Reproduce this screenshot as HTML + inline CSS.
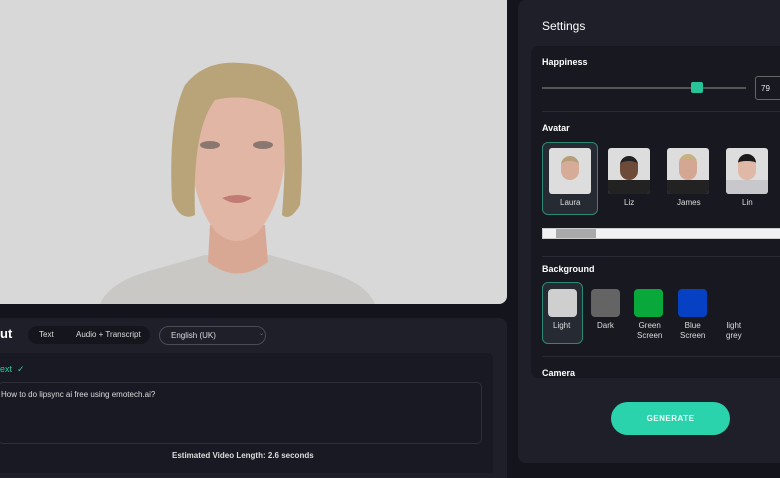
<!DOCTYPE html>
<html><head><style>
*{margin:0;padding:0;box-sizing:border-box}
body{width:780px;height:470px;overflow:hidden;background:#14151c;font-family:"Liberation Sans",sans-serif;color:#e6e6ea;position:relative}
.a{position:absolute}
.t{font-size:8px;color:#ddd}
.b{font-weight:bold}
</style></head><body>
<div class="a" style="left:0;top:0;width:507px;height:304px;background:#d8d8d8;border-radius:0 0 8px 0;overflow:hidden">
  <svg width="507" height="304" style="position:absolute;left:0;top:0">
    <path d="M100 304 Q110 280 160 268 L205 255 L270 255 L315 268 Q365 280 375 304 Z" fill="#c9c8c5"/>
    <path d="M210 225 L208 262 Q237 285 268 262 L265 225 Z" fill="#d9a894"/>
    <path d="M190 135 Q188 70 237 68 Q288 70 286 135 Q286 200 258 232 Q237 250 216 232 Q190 200 190 135Z" fill="#e2b6a4"/>
    <path d="M172 200 Q168 120 185 85 Q205 60 240 63 Q285 64 297 100 Q305 150 300 205 Q290 222 282 215 Q288 140 280 110 Q250 92 215 100 Q192 130 195 215 Q180 222 172 200Z" fill="#b9a47a"/>
    <ellipse cx="210" cy="145" rx="10" ry="4" fill="#8a7770"/>
    <ellipse cx="263" cy="145" rx="10" ry="4" fill="#8a7770"/>
    <path d="M222 198 Q237 192 252 198 Q237 208 222 198Z" fill="#c07b74"/>
  </svg>
</div>
<div class="a" style="left:0;top:318px;width:507px;height:160px;background:#1e1f29;border-radius:0 8px 0 0"></div>
<div class="a b" style="left:0;top:326px;font-size:13px;color:#fff">ut</div>
<div class="a" style="left:28px;top:326px;width:122px;height:18px;border-radius:9px;background:#15161d"></div>
<div class="a t" style="left:39px;top:330px">Text</div>
<div class="a t" style="left:76px;top:330px">Audio + Transcript</div>
<div class="a" style="left:159px;top:326px;width:107px;height:19px;border-radius:10px;border:1px solid #4a4b55"></div>
<div class="a t" style="left:171px;top:331px">English (UK)</div>
<div class="a" style="left:259px;top:330px;font-size:6px;color:#777">⌄</div>
<div class="a" style="left:0;top:353px;width:493px;height:120px;background:#181922;border-radius:0 6px 0 0"></div>
<div class="a" style="left:0;top:364px;font-size:9px;color:#2fc9a0">ext &nbsp;✓</div>
<div class="a" style="left:-2px;top:382px;width:484px;height:62px;border:1px solid #2d2e38;border-radius:5px"></div>
<div class="a t" style="left:1px;top:390px">How to do lipsync ai free using emotech.ai?</div>
<div class="a t b" style="left:172px;top:451px">Estimated Video Length: 2.6 seconds</div>
<div class="a" style="left:518px;top:0;width:270px;height:463px;background:#1e1f29;border-radius:8px"></div>
<div class="a" style="left:542px;top:19px;font-size:12px;color:#fff">Settings</div>
<div class="a" style="left:531px;top:46px;width:260px;height:332px;background:#171820;border-radius:8px"></div>
<div class="a b" style="left:542px;top:57px;font-size:9px;color:#fff">Happiness</div>
<div class="a" style="left:542px;top:87px;width:204px;height:2px;background:#555"></div>
<div class="a" style="left:691px;top:82px;width:12px;height:11px;border-radius:2px;background:#27c49a"></div>
<div class="a" style="left:755px;top:76px;width:30px;height:24px;border:1px solid #666;border-radius:3px;font-size:8px;padding:7px 0 0 5px">79</div>
<div class="a" style="left:542px;top:111px;width:240px;height:1px;background:#2a2b35"></div>
<div class="a b" style="left:542px;top:123px;font-size:9px;color:#fff">Avatar</div>
<div class="a" style="left:542px;top:142px;width:56px;height:73px;border:1px solid #2c8a74;border-radius:6px;background:#252a33"></div>
<div class="a" style="left:549px;top:148px;width:42px;height:46px;background:#ddd;border-radius:3px"><div style="margin:8px auto 0;width:18px;height:24px;border-radius:9px;background:#d6ab98;border-top:5px solid #b59f78"></div></div>
<div class="a" style="left:608px;top:148px;width:42px;height:46px;background:#ddd;border-radius:3px;overflow:hidden"><div style="margin:8px auto 0;width:18px;height:24px;border-radius:9px;background:#6e4a39;border-top:5px solid #222"></div><div style="height:14px;background:#222"></div></div>
<div class="a" style="left:667px;top:148px;width:42px;height:46px;background:#ddd;border-radius:3px;overflow:hidden"><div style="margin:6px auto 0;width:18px;height:26px;border-radius:9px;background:#d3a791;border-top:5px solid #c9b080"></div><div style="height:14px;background:#222"></div></div>
<div class="a" style="left:726px;top:148px;width:42px;height:46px;background:#ddd;border-radius:3px;overflow:hidden"><div style="margin:6px auto 0;width:18px;height:26px;border-radius:9px;background:#e0b8a8;border-top:7px solid #1a1a1a"></div><div style="height:14px;background:#c8c8cc"></div></div>
<div class="a t" style="left:560px;top:198px">Laura</div>
<div class="a t" style="left:624px;top:198px">Liz</div>
<div class="a t" style="left:677px;top:198px">James</div>
<div class="a t" style="left:742px;top:198px">Lin</div>
<div class="a" style="left:542px;top:228px;width:240px;height:11px;background:#f2f2f2;border:1px solid #ccc"></div>
<div class="a" style="left:556px;top:229px;width:40px;height:9px;background:#aaa"></div>
<div class="a" style="left:542px;top:256px;width:240px;height:1px;background:#2a2b35"></div>
<div class="a b" style="left:542px;top:264px;font-size:9px;color:#fff">Background</div>
<div class="a" style="left:542px;top:282px;width:41px;height:62px;border:1px solid #2c8a74;border-radius:6px;background:#252a33"></div>
<div class="a" style="left:548px;top:289px;width:29px;height:28px;border-radius:4px;background:#cfcfcf"></div>
<div class="a" style="left:591px;top:289px;width:29px;height:28px;border-radius:4px;background:#646464"></div>
<div class="a" style="left:634px;top:289px;width:29px;height:28px;border-radius:4px;background:#08a83a"></div>
<div class="a" style="left:678px;top:289px;width:29px;height:28px;border-radius:4px;background:#0641c4"></div>
<div class="a t" style="left:553px;top:321px">Light</div>
<div class="a t" style="left:597px;top:321px">Dark</div>
<div class="a t" style="left:637px;top:321px;text-align:center;line-height:10px">Green<br>Screen</div>
<div class="a t" style="left:680px;top:321px;text-align:center;line-height:10px">Blue<br>Screen</div>
<div class="a t" style="left:726px;top:321px;text-align:center;line-height:10px">light<br>grey</div>
<div class="a" style="left:542px;top:356px;width:240px;height:1px;background:#2a2b35"></div>
<div class="a b" style="left:542px;top:368px;font-size:9px;color:#fff">Camera</div>
<div class="a" style="left:611px;top:402px;width:119px;height:33px;border-radius:17px;background:#2bd3ad;color:#e8fff8;font-size:8px;font-weight:bold;letter-spacing:0.5px;text-align:center;line-height:33px">GENERATE</div>
</body></html>
